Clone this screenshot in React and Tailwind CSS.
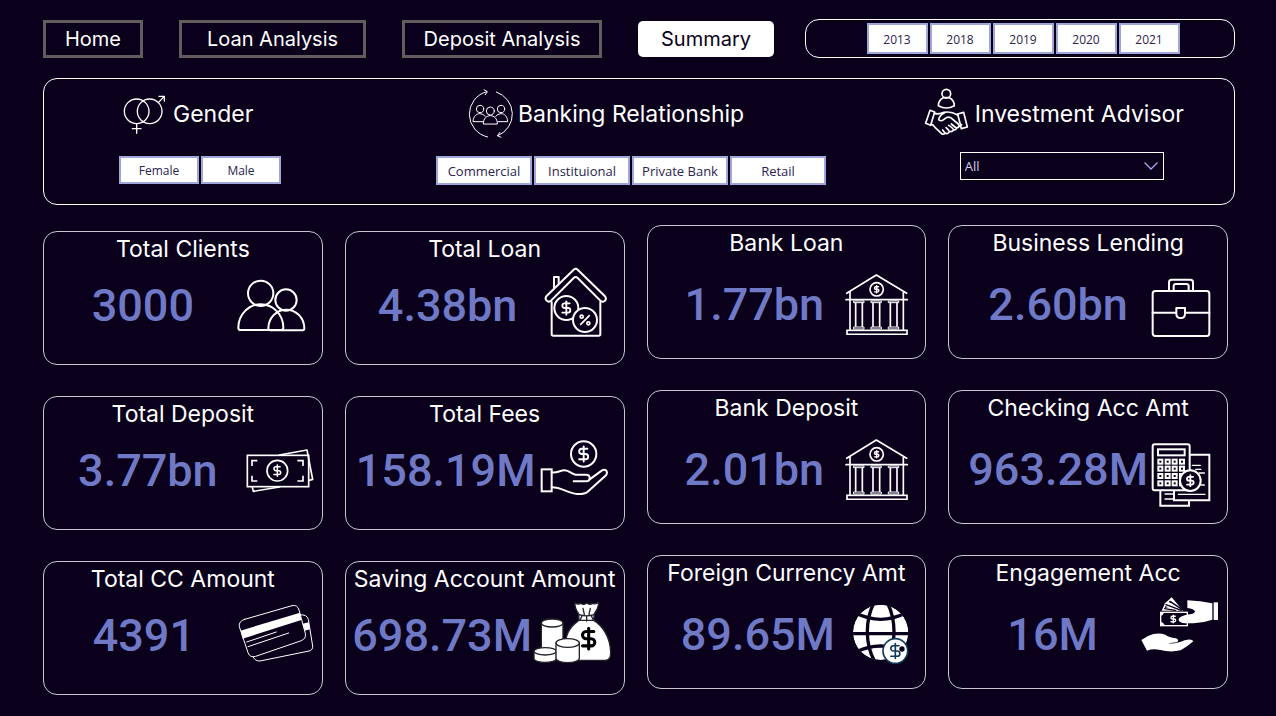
import { useState } from "react";
import { DollarSign, Percent } from "lucide-react";

const INK = "#0a001c";

function Dollar({ cx, cy, size, color = "white", weight = 2.5 }) {
  return <DollarSign x={cx - size / 2} y={cy - size / 2} width={size} height={size} color={color} strokeWidth={weight} />;
}

function Icon({ box, className, stroke = 5, children }) {
  return (
    <svg
      viewBox={box}
      className={"shrink-0 " + className}
      fill="none"
      stroke="white"
      strokeWidth={stroke}
      strokeLinecap="round"
      strokeLinejoin="round"
      aria-hidden="true"
    >
      {children}
    </svg>
  );
}

function GenderIcon() {
  return (
    <Icon box="280 256 126 117" className="h-[39px] w-[42px]" stroke={4}>
      <circle cx="321" cy="305" r="37" />
      <circle cx="360" cy="305" r="37" />
      <path d="M386 279 403 261M388 260H404V274M321 343V371M308 357H334" />
    </Icon>
  );
}

function RelationshipIcon() {
  return (
    <Icon box="138 240 144 150" className="h-[50px] w-12" stroke={3}>
      <path d="M203 384A70 70 0 0 1 200 248M229 249A70 70 0 0 1 234 380" />
      <path d="M192 242 202 248 196 257M240 370 232 380 243 385" />
      <circle cx="180" cy="300" r="11" />
      <circle cx="243" cy="300" r="11" />
      <circle cx="211" cy="306" r="12" />
      <path d="M188 338H159C160 322 169 314 180 314Q189 314 196 322M234 338H263C262 322 254 314 243 314Q233 314 227 322" />
      <path d="M190 344C190 328 200 320 211 320S232 328 232 344Z" />
    </Icon>
  );
}

function HandshakeIcon() {
  return (
    <Icon box="378 231 135 144" className="mb-1 h-12 w-[45px]" stroke={5}>
      <circle cx="445" cy="248" r="13" />
      <path d="M436 260C426 265 421 274 421 284Q445 298 469 284C469 274 464 265 454 260Z" />
      <path d="M396 298 410 303 398 343 383 337ZM479 309 497 304 508 348 490 353Z" />
      <path d="M409 307Q424 311 438 304Q458 300 479 312" />
      <path d="M440 305Q424 312 422 326Q429 334 441 323Q449 316 458 320L481 339Q485 344 481 349Q476 352 471 348L460 339" />
      <path d="M400 340Q406 341 411 349L430 367Q436 373 441 366L434 357M441 366Q448 370 453 364Q455 359 444 350M454 361Q461 364 466 358Q468 353 452 343M466 356Q475 358 477 350" />
      <path d="M484 346 491 341" />
    </Icon>
  );
}

function ClientsIcon() {
  return (
    <Icon box="618 174 210 159" className="h-[53px] w-[70px]" stroke={6}>
      <circle cx="692" cy="217" r="38" />
      <circle cx="768" cy="237" r="32" />
      <path d="M625 320A67.5 70 0 0 1 760 320Q760 327 753 327H632Q625 327 625 320Z" />
      <path d="M715 322A54 56 0 0 1 823 322Q823 328 817 328H721Q715 328 715 322Z" />
    </Icon>
  );
}

function HouseIcon() {
  return (
    <Icon box="618 142 192 213" className="mb-1.5 h-[71px] w-16" stroke={6}>
      <path d="M707 150Q713 145 719 150L801 230Q807 238 800 244 793 249 787 243L719 175Q713 169 707 175L639 243Q632 249 626 243 620 237 625 230Z" />
      <path d="M641 247V343Q641 348 646 348H782Q787 348 787 343V247M648 204V172H662V191" />
      <circle cx="685" cy="265" r="36" fill={INK} />
      <circle cx="741" cy="301" r="36" fill={INK} />
      <Dollar cx={685} cy={265} size={48} weight={2.8} />
      <Percent x={719} y={279} width={44} height={44} color="white" strokeWidth={2.8} />
    </Icon>
  );
}

function BankIcon() {
  return (
    <Icon box="622 160 192 186" className="h-[62px] w-16" stroke={5}>
      <path d="M627 221 716 166 807 221M625 240H809M637 216V330M797 216V330" />
      {[664, 716, 768].map((x) => (
        <g key={x}>
          <path d={`M${x - 10} 250V320M${x + 10} 250V320`} />
          <path d={`M${x - 15} 244H${x + 15}V249H${x - 15}ZM${x - 15} 322H${x + 15}V328H${x - 15}Z`} strokeWidth="3" />
        </g>
      ))}
      <rect x="628" y="332" width="180" height="12" strokeLinejoin="miter" />
      <circle cx="717" cy="209" r="20" />
      <Dollar cx={717} cy={209} size={26} weight={4} />
    </Icon>
  );
}

function BriefcaseIcon() {
  return (
    <Icon box="628 174 180 180" className="mt-2 size-[60px]" stroke={6}>
      <rect x="633" y="213" width="170" height="135" rx="8" />
      <path d="M633 278H703M732 278H803M704 264H730V281Q730 294 717 294T704 281Z" />
      <path d="M682 211V187Q682 179 690 179H746Q754 179 754 187V211M696 211V199Q696 192 703 192H734Q741 192 741 199V211" />
    </Icon>
  );
}

function CashIcon() {
  return (
    <Icon box="76 174 204 135" className="h-[45px] w-[68px]">
      <rect x="80" y="196" width="184" height="94" strokeLinejoin="miter" />
      <path d="M176 195 259 180 276 268 265 271M95 292 98 304 176 291" />
      <path d="M94 228V212H110M230 212H247V228M94 257V273H110M230 273H247V257" strokeLinecap="butt" strokeLinejoin="miter" />
      <circle cx="170" cy="242" r="31" />
      <Dollar cx={170} cy={242} size={40} weight={2.8} />
    </Icon>
  );
}

function HandCoinIcon() {
  return (
    <Icon box="955 150 204 168" className="mb-1 h-14 w-[68px]" stroke={6}>
      <circle cx="1086" cy="192" r="38" />
      <Dollar cx={1086} cy={192} size={54} weight={2.6} />
      <rect x="960" y="238" width="30" height="66" strokeLinejoin="miter" />
      <path d="M990 247C1006 250 1014 241 1029 241 1044 241 1050 254 1062 254H1093Q1104 254 1104 264T1093 274H1056" />
      <path d="M1104 268 1140 242Q1148 236 1154 242 1158 249 1153 256L1098 305Q1088 313 1066 312C1036 310 1022 292 990 292" />
    </Icon>
  );
}

function CalculatorIcon() {
  return (
    <Icon box="954 160 180 192" className="mt-3 h-16 w-[60px]" stroke={6}>
      <path d="M1072 195H1129V332H1023V304M982 306V348H1068V334" strokeLinejoin="miter" />
      <path d="M1078 227H1102M1088 239H1104M1098 250H1114M1104 286H1114M1036 314H1116M996 313H1020M996 328H1020" strokeWidth="4" />
      <rect x="959" y="164" width="111" height="138" rx="6" />
      <rect x="975" y="179" width="80" height="18" strokeLinejoin="miter" />
      {[976, 998, 1019, 1041].map((x) =>
        [210, 231, 253, 275].map((y) => (
          <rect key={x + "-" + y} x={x} y={y} width="12" height="12" strokeLinejoin="miter" />
        ))
      )}
      <circle cx="1072" cy="273" r="31" fill={INK} />
      <Dollar cx={1072} cy={273} size={40} weight={3.2} />
    </Icon>
  );
}

function CreditCardsIcon() {
  return (
    <Icon box="52 160 228 174" className="mb-1 h-[58px] w-[76px]" stroke={3}>
      <path d="M72 206 214 165Q230 161 235 178L254 248Q257 264 242 270L105 317Q88 322 82 306L56 228Q53 212 72 206Z" />
      <path d="M60 240 238 186 242 208 66 264ZM246 219 264 215 268 236 252 240Z" fill="white" stroke="none" />
      <path d="M78 274 167 244M82 288 204 247" />
      <path d="M238 193Q258 190 263 206L276 286Q277 298 265 301L118 331Q104 332 98 320" />
    </Icon>
  );
}

function Coins({ x, top, width, ry, bottom }) {
  const r = width / 2;
  return (
    <g>
      <path d={`M${x} ${top}V${bottom}A${r} ${ry} 0 0 0 ${x + width} ${bottom}V${top}Z`} />
      <ellipse cx={x + r} cy={top} rx={r} ry={ry} />
    </g>
  );
}

function MoneyBagIcon() {
  return (
    <Icon box="936 152 237 189" className="mb-1.5 h-[63px] w-[79px]">
      <g fill="white" stroke="#26232b" strokeWidth="4">
        <path d="M1074 210H1118C1142 224 1168 258 1169 306Q1170 330 1152 330H1050Q1030 325 1034 272C1038 240 1055 225 1074 210Z" />
        <path d="M1062 157Q1071 164 1079 159 1088 166 1096 158 1106 165 1116 159 1124 163 1133 156 1133 173 1120 190L1118 210H1074L1073 190Q1060 173 1062 157Z" />
        <path d="M1086 174 1090 192M1108 174 1104 192M1074 193Q1096 200 1120 193M1083 196 1077 210M1097 198V212M1111 196 1117 210" />
        <Coins x={961} top={218} width={65} ry={12} bottom={296} />
        <Coins x={939} top={303} width={67} ry={11} bottom={325} />
        <Coins x={1005} top={278} width={70} ry={13} bottom={324} />
      </g>
      <Dollar cx={1103} cy={265} size={74} color="black" weight={3} />
    </Icon>
  );
}

function GlobeIcon() {
  return (
    <Icon box="60 158 171 183" className="h-[61px] w-[57px]">
      <defs>
        <clipPath id="globe-disc">
          <circle cx="146" cy="243" r="83" />
        </clipPath>
      </defs>
      <g clipPath="url(#globe-disc)" stroke={INK} strokeWidth="10">
        <circle cx="146" cy="243" r="83" fill="white" stroke="none" />
        <path d="M60 247H232M72 186Q146 222 220 186M72 302Q146 266 220 302" />
        <path d="M128 150C98 205 98 285 132 336M164 150C194 205 194 285 160 336" />
      </g>
      <circle cx="190" cy="299" r="37" fill="white" stroke="#103a5a" />
      <Dollar cx={190} cy={299} size={54} color="#103a5a" weight={2.2} />
      <circle cx="210" cy="293" r="8" fill={INK} stroke="none" />
    </Icon>
  );
}

function PaymentIcon() {
  return (
    <Icon box="924 134 237 171" className="mb-5 h-[57px] w-[79px]">
      <path d="M1019 138 1053 178H989L999 156Z" fill="white" stroke="none" />
      <path d="M1002 160 1048 177M1014 150 1050 174M998 172 1030 177" stroke={INK} strokeWidth="4" />
      <path d="M1014 148 1020 153 1012 156ZM1000 164 1008 168 998 170Z" fill={INK} stroke="none" />
      <rect x="986" y="183" width="80" height="40" strokeLinejoin="miter" strokeWidth="4" />
      <path d="M985 182H997Q994 192 985 194ZM985 224H999Q996 213 985 211Z" fill="white" stroke="none" />
      <Dollar cx={1024} cy={203} size={28} weight={3.4} />
      <path
        d="M1066 147Q1105 149 1141 156V205Q1112 215 1085 216H1058Q1038 213 1040 204 1042 195 1063 190 1088 190 1089 180 1086 173 1066 170Z"
        fill="white"
        stroke="none"
      />
      <path d="M1145 153H1158V206H1145Z" fill="white" stroke="none" />
      <path
        d="M928 266 948 254Q976 242 1000 250 1010 258 1032 261 1044 267 1034 273L1008 276Q1036 278 1058 267 1080 261 1084 270 1066 286 1046 297 1016 304 985 296 962 291 945 298Z"
        fill="white"
        stroke="none"
      />
    </Icon>
  );
}

const leftColumns = [
  [
    { title: "Total Clients", value: "3000", icon: ClientsIcon, end: "pr-4" },
    { title: "Total Deposit", value: "3.77bn", icon: CashIcon, end: "pr-2" },
    { title: "Total CC Amount", value: "4391", icon: CreditCardsIcon, end: "pr-2" },
  ],
  [
    { title: "Total Loan", value: "4.38bn", icon: HouseIcon, end: "pr-4" },
    { title: "Total Fees", value: "158.19M", icon: HandCoinIcon, end: "pr-4" },
    { title: "Saving Account Amount", value: "698.73M", icon: MoneyBagIcon, end: "pr-3" },
  ],
];

const rightColumns = [
  [
    { title: "Bank Loan", value: "1.77bn", icon: BankIcon, end: "pr-4" },
    { title: "Bank Deposit", value: "2.01bn", icon: BankIcon, end: "pr-4" },
    { title: "Foreign Currency Amt", value: "89.65M", icon: GlobeIcon, end: "pr-4" },
  ],
  [
    { title: "Business Lending", value: "2.60bn", icon: BriefcaseIcon, end: "pr-4" },
    { title: "Checking Acc Amt", value: "963.28M", icon: CalculatorIcon, end: "pr-4" },
    { title: "Engagement Acc", value: "16M", icon: PaymentIcon, end: "pr-2" },
  ],
];

function StatCard({ card, bodyClass, valueClass }) {
  const CardIcon = card.icon;
  return (
    <article className="min-h-[134px] rounded-[14px] border border-[#c9c6ce]">
      <h2 className="pt-px text-center text-[23px] leading-8 whitespace-nowrap">{card.title}</h2>
      <div className={`flex items-center ${card.end} ${bodyClass}`}>
        <p className={"min-w-0 flex-1 pt-0.5 text-center font-['Roboto',sans-serif] text-[45px] leading-[56px] font-medium whitespace-nowrap text-[#6f79c6] " + valueClass}>
          {card.value}
        </p>
        <CardIcon />
      </div>
    </article>
  );
}

function CardColumns({ columns, className, bodyClass, valueClass }) {
  return (
    <div className={"grid min-w-0 flex-1 grid-cols-2 gap-x-[22px] " + className}>
      {columns.map((cards) => (
        <div key={cards[0].title} className="flex min-w-0 flex-col gap-[31px]">
          {cards.map((card) => (
            <StatCard key={card.title} card={card} bodyClass={bodyClass} valueClass={valueClass} />
          ))}
        </div>
      ))}
    </div>
  );
}

function Slicer({ label, options, itemClass }) {
  const [selected, setSelected] = useState(null);
  return (
    <div role="group" aria-label={label} className="flex gap-0.5">
      {options.map((option) => (
        <button
          key={option}
          type="button"
          aria-pressed={selected === option}
          onClick={() => setSelected(selected === option ? null : option)}
          className={"border-2 border-[#a0a6d9] bg-white pt-0.5 text-center font-['Open_Sans',sans-serif] whitespace-nowrap text-[#2b2350] " + itemClass}
        >
          {option}
        </button>
      ))}
    </div>
  );
}

const tabClass = "flex h-[38px] items-center justify-center border-3 border-[#605d5c] whitespace-nowrap";

export default function App() {
  return (
    <main className="min-h-screen bg-[#0a001c] pt-[19px] pr-[41px] pb-5 pl-[43px] font-['Inter',sans-serif] text-white">
      <header className="flex items-center">
        <nav className="flex items-center gap-9 pt-px text-[20px]">
          <a href="#home" className={tabClass + " w-[100px]"}>Home</a>
          <a href="#loan" className={tabClass + " w-[187px]"}>Loan Analysis</a>
          <a href="#deposit" className={tabClass + " w-[200px]"}>Deposit Analysis</a>
          <a href="#summary" aria-current="page" className="flex h-9 w-[136px] items-center justify-center rounded-[5px] bg-white text-[#0a001c]">
            Summary
          </a>
        </nav>
        <div className="ml-[31px] flex h-[39px] flex-1 items-center justify-center rounded-[14px] border border-white pl-1.5">
          <Slicer label="Year" options={["2013", "2018", "2019", "2020", "2021"]} itemClass="h-[31px] w-[61px] text-xs" />
        </div>
      </header>

      <section className="mt-5 flex min-h-[127px] rounded-[14px] border border-white pt-2 pr-[50px] pl-[75px]">
        <div>
          <h2 className="flex h-[54px] items-center gap-2 pl-1 text-[23px]">
            <GenderIcon />
            Gender
          </h2>
          <div className="pt-[15px]">
            <Slicer label="Gender" options={["Female", "Male"]} itemClass="h-7 w-20 text-xs" />
          </div>
        </div>
        <div className="ml-[155px]">
          <h2 className="flex h-[54px] items-center gap-1 pl-[30px] text-[23px]">
            <RelationshipIcon />
            Banking Relationship
          </h2>
          <div className="pt-[15px]">
            <Slicer
              label="Banking Relationship"
              options={["Commercial", "Instituional", "Private Bank", "Retail"]}
              itemClass="h-[29px] w-24 text-[13px]"
            />
          </div>
        </div>
        <div className="ml-auto">
          <label htmlFor="advisor" className="flex h-[54px] items-center gap-1.5 text-[23px]">
            <HandshakeIcon />
            Investment Advisor
          </label>
          <div className="grid w-[240px] pt-[11px] pl-9">
            <select
              id="advisor"
              className="col-start-1 row-start-1 h-7 appearance-none border border-white bg-transparent pt-0.5 pl-1 font-['Open_Sans',sans-serif] text-[13px] text-[#d3cbe9]"
            >
              <option>All</option>
            </select>
            <svg viewBox="0 0 14 8" className="pointer-events-none col-start-1 row-start-1 mr-1.5 h-2 w-3.5 self-center justify-self-end" fill="none" stroke="#b39df0" strokeWidth="1.3" aria-hidden="true">
              <path d="M.5 .5 7 7 13.5 .5" />
            </svg>
          </div>
        </div>
      </section>

      <section className="mt-5 flex gap-[22px] pr-[7px]">
        <CardColumns columns={leftColumns} className="pt-1.5" bodyClass="h-20" valueClass="pl-1.5" />
        <CardColumns columns={rightColumns} className="" bodyClass="h-[90px]" valueClass="pl-4" />
      </section>
    </main>
  );
}
